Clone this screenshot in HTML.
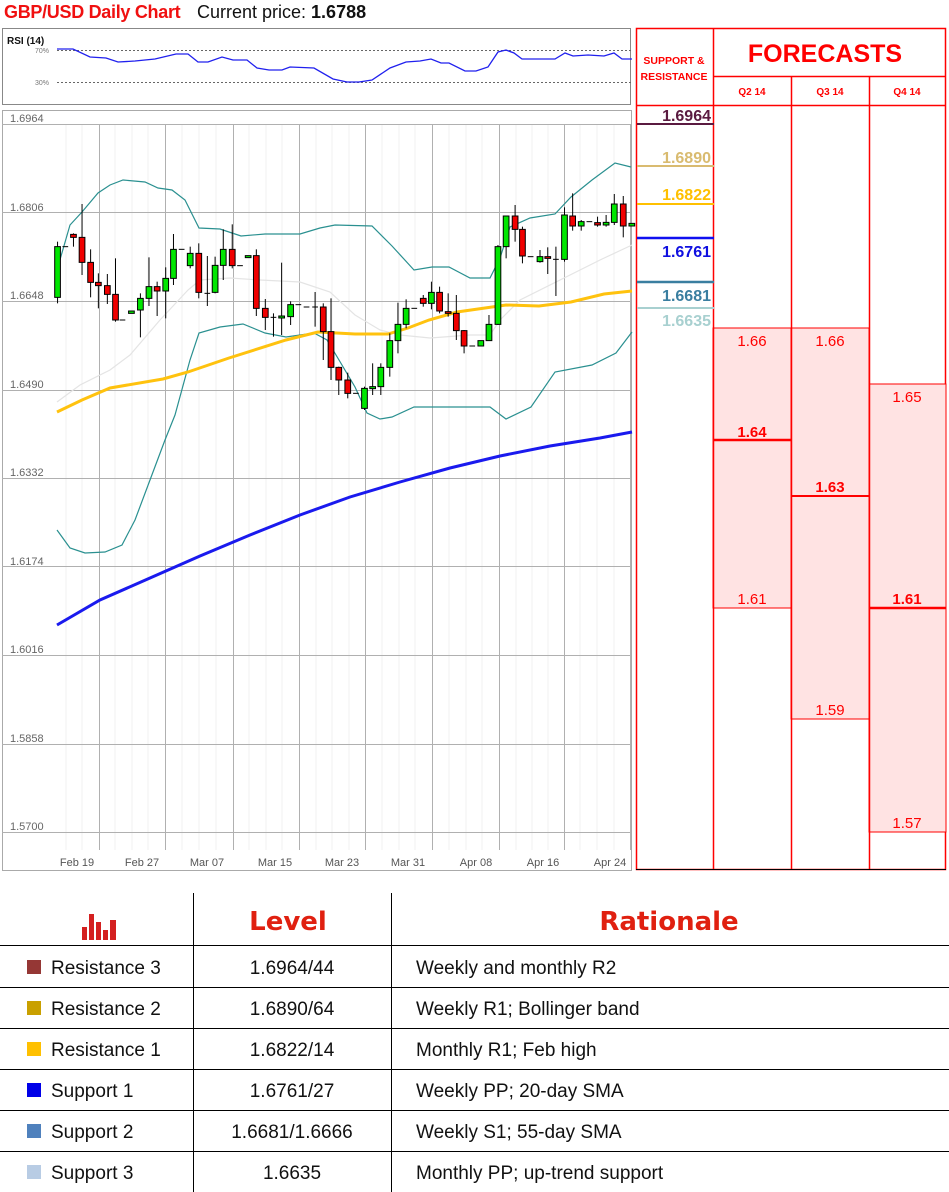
<!DOCTYPE html>
<html><head><meta charset="utf-8">
<style>
body{margin:0;width:949px;height:1192px;background:#fff;position:relative;overflow:hidden;font-family:"Liberation Sans",sans-serif}
.t{position:absolute;white-space:nowrap}
.g{fill:#00e600;stroke:#000}
.r{fill:#f00000;stroke:#000}
svg *{vector-effect:non-scaling-stroke}
</style></head><body>
<div class="t" style="left:4px;top:2px;font-size:18px;font-weight:bold;color:#f01010;letter-spacing:-0.3px">GBP/USD Daily Chart</div>
<div class="t" style="left:197px;top:2px;font-size:18px;color:#111">Current price: <b>1.6788</b></div>

<svg width="949" height="880" style="position:absolute;left:0;top:0" font-family="Liberation Sans, sans-serif">
<!-- RSI box -->
<rect x="2.5" y="28.5" width="628" height="76" fill="#fff" stroke="#888"/>
<text x="7" y="44" font-size="10" font-weight="bold" fill="#111">RSI (14)</text>
<text x="35" y="53" font-size="7" fill="#777">70%</text>
<text x="35" y="85" font-size="7" fill="#777">30%</text>
<line x1="57" y1="50.5" x2="631" y2="50.5" stroke="#666" stroke-dasharray="2,2"/>
<line x1="57" y1="82.5" x2="631" y2="82.5" stroke="#666" stroke-dasharray="2,2"/>
<polyline fill="none" stroke="#2020ee" stroke-width="1.3" points="57,49 73,49 90,57 106,58 118,62 135,61 155,59 176,54 188,54 198,62 208,62 222,57 233,60 247,60 257,68 269,70 282,70 290,67 314,68 333,79 347,82 359,82 372,80 390,68 406,62 420,61 431,59 441,63 449,63 465,71 476,71 488,67 498,52 506,50 514,53 522,59 555,59 565,53 573,56 588,55 604,56 614,53 622,59 632,59"/>

<!-- main chart -->
<rect x="2.5" y="110.5" width="629" height="760" fill="#fff" stroke="#aaa"/>
<g stroke="#f0f0f0">
<line x1="115" y1="124" x2="115" y2="850"/><line x1="132" y1="124" x2="132" y2="850"/><line x1="148" y1="124" x2="148" y2="850"/><line x1="182" y1="124" x2="182" y2="850"/><line x1="199" y1="124" x2="199" y2="850"/><line x1="216" y1="124" x2="216" y2="850"/><line x1="249" y1="124" x2="249" y2="850"/><line x1="266" y1="124" x2="266" y2="850"/><line x1="282" y1="124" x2="282" y2="850"/><line x1="316" y1="124" x2="316" y2="850"/><line x1="332" y1="124" x2="332" y2="850"/><line x1="349" y1="124" x2="349" y2="850"/><line x1="382" y1="124" x2="382" y2="850"/><line x1="399" y1="124" x2="399" y2="850"/><line x1="415" y1="124" x2="415" y2="850"/><line x1="449" y1="124" x2="449" y2="850"/><line x1="466" y1="124" x2="466" y2="850"/><line x1="482" y1="124" x2="482" y2="850"/><line x1="516" y1="124" x2="516" y2="850"/><line x1="532" y1="124" x2="532" y2="850"/><line x1="548" y1="124" x2="548" y2="850"/><line x1="580" y1="124" x2="580" y2="850"/><line x1="597" y1="124" x2="597" y2="850"/><line x1="614" y1="124" x2="614" y2="850"/>
<line x1="66" y1="124" x2="66" y2="850"/><line x1="82" y1="124" x2="82" y2="850"/>
</g>
<g stroke="#b0b0b0">
<line x1="2" y1="124.5" x2="631" y2="124.5"/><line x1="2" y1="212.5" x2="631" y2="212.5"/><line x1="2" y1="301.5" x2="631" y2="301.5"/><line x1="2" y1="390.5" x2="631" y2="390.5"/><line x1="2" y1="478.5" x2="631" y2="478.5"/><line x1="2" y1="566.5" x2="631" y2="566.5"/><line x1="2" y1="655.5" x2="631" y2="655.5"/><line x1="2" y1="744.5" x2="631" y2="744.5"/><line x1="2" y1="832.5" x2="631" y2="832.5"/>
<line x1="99.5" y1="124" x2="99.5" y2="850"/><line x1="165.5" y1="124" x2="165.5" y2="850"/><line x1="233.5" y1="124" x2="233.5" y2="850"/><line x1="299.5" y1="124" x2="299.5" y2="850"/><line x1="365.5" y1="124" x2="365.5" y2="850"/><line x1="432.5" y1="124" x2="432.5" y2="850"/><line x1="499.5" y1="124" x2="499.5" y2="850"/><line x1="564.5" y1="124" x2="564.5" y2="850"/><line x1="630.5" y1="124" x2="630.5" y2="850"/>
</g>
<g font-size="11" fill="#666">
<text x="10" y="122">1.6964</text><text x="10" y="211">1.6806</text><text x="10" y="299">1.6648</text><text x="10" y="388">1.6490</text><text x="10" y="476">1.6332</text><text x="10" y="565">1.6174</text><text x="10" y="653">1.6016</text><text x="10" y="742">1.5858</text><text x="10" y="830">1.5700</text>
</g>
<g font-size="11" fill="#555" text-anchor="middle">
<text x="77" y="866">Feb 19</text><text x="142" y="866">Feb 27</text><text x="207" y="866">Mar 07</text><text x="275" y="866">Mar 15</text><text x="342" y="866">Mar 23</text><text x="408" y="866">Mar 31</text><text x="476" y="866">Apr 08</text><text x="543" y="866">Apr 16</text><text x="610" y="866">Apr 24</text>
</g>

<polyline fill="none" stroke="#1a1aee" stroke-width="3" points="57,625 100,600 150,578 200,556 250,535 300,515 350,497 400,482 450,468 500,456 550,446 600,438 632,432"/>
<polyline fill="none" stroke="#e4e4e4" stroke-width="1.2" points="57,402 80,385 110,370 130,355 160,320 188,290 200,280 230,278 260,280 300,282 330,292 355,315 380,330 400,335 430,338 470,335 490,335 500,320 520,300 560,280 600,260 632,245"/>
<polyline fill="none" stroke="#2a9090" stroke-width="1.2" points="57,270 70,225 82,212 98,193 110,185 123,180 145,182 158,188 172,190 185,200 199,228 220,229 241,236 265,234 300,234 320,228 335,225 372,226 392,246 414,270 432,267 449,267 470,278 490,278 500,258 510,227 530,218 555,214 571,197 592,180 615,163 631,167"/>
<polyline fill="none" stroke="#2a9090" stroke-width="1.2" points="57,530 70,548 85,553 105,552 122,545 135,520 150,480 165,440 175,415 190,360 199,333 220,327 243,324 265,333 286,337 314,333 327,340 339,360 355,387 367,413 380,419 392,417 414,407 490,407 506,419 531,407 555,372 592,365 616,353 632,332"/>
<polyline fill="none" stroke="#ffc20e" stroke-width="3" points="57,412 82,400 110,388 163,379 188,372 229,358 286,340 318,332 355,334 388,334 408,328 429,320 457,312 506,305 539,306 571,302 604,294 632,291"/>

<g transform="translate(0,180) scale(0.40816,0.33333)" stroke="#000" stroke-width="1">
<line x1="141" y1="185" x2="141" y2="370"/><rect class="g" x="134" y="200" width="14" height="152"/>
<line x1="153" y1="200" x2="167" y2="200"/>
<line x1="180" y1="160" x2="180" y2="200"/><rect class="r" x="173" y="163" width="14" height="9"/>
<line x1="201" y1="72" x2="201" y2="285"/><rect class="r" x="194" y="172" width="14" height="75"/>
<line x1="222" y1="208" x2="222" y2="352"/><rect class="r" x="215" y="247" width="14" height="60"/>
<line x1="241" y1="280" x2="241" y2="385"/><rect class="r" x="234" y="307" width="14" height="10"/>
<line x1="263" y1="282" x2="263" y2="372"/><rect class="r" x="256" y="317" width="14" height="26"/>
<line x1="283" y1="235" x2="283" y2="425"/><rect class="r" x="276" y="343" width="14" height="77"/>
<line x1="293" y1="420" x2="307" y2="420"/>
<rect class="g" x="315" y="393" width="14" height="7"/>
<line x1="344" y1="340" x2="344" y2="472"/><rect class="g" x="337" y="355" width="14" height="35"/>
<line x1="365" y1="232" x2="365" y2="378"/><rect class="g" x="358" y="320" width="14" height="35"/>
<line x1="385" y1="305" x2="385" y2="408"/><rect class="r" x="378" y="320" width="14" height="13"/>
<line x1="406" y1="262" x2="406" y2="415"/><rect class="g" x="399" y="295" width="14" height="38"/>
<line x1="425" y1="162" x2="425" y2="315"/><rect class="g" x="418" y="208" width="14" height="87"/>
<line x1="438" y1="208" x2="452" y2="208"/>
<line x1="466" y1="200" x2="466" y2="265"/><rect class="g" x="459" y="220" width="14" height="37"/>
<line x1="487" y1="190" x2="487" y2="355"/><rect class="r" x="480" y="220" width="14" height="117"/>
<line x1="508" y1="228" x2="508" y2="378"/><line x1="501" y1="340" x2="515" y2="340"/>
<line x1="527" y1="230" x2="527" y2="340"/><rect class="g" x="520" y="256" width="14" height="81"/>
<line x1="547" y1="148" x2="547" y2="300"/><rect class="g" x="540" y="208" width="14" height="48"/>
<line x1="569" y1="133" x2="569" y2="265"/><rect class="r" x="562" y="208" width="14" height="49"/>
<line x1="581" y1="257" x2="595" y2="257"/>
<rect class="g" x="601" y="227" width="14" height="6"/>
<line x1="628" y1="208" x2="628" y2="408"/><rect class="r" x="621" y="227" width="14" height="158"/>
<line x1="650" y1="357" x2="650" y2="450"/><rect class="r" x="643" y="385" width="14" height="27"/>
<line x1="670" y1="400" x2="670" y2="470"/><line x1="663" y1="412" x2="677" y2="412"/>
<line x1="690" y1="248" x2="690" y2="465"/><rect class="g" x="683" y="408" width="14" height="6"/>
<line x1="712" y1="364" x2="712" y2="435"/><rect class="g" x="705" y="374" width="14" height="36"/>
<line x1="724" y1="374" x2="738" y2="374"/>
<line x1="744" y1="381" x2="758" y2="381"/>
<line x1="772" y1="336" x2="772" y2="440"/><line x1="765" y1="381" x2="779" y2="381"/>
<line x1="792" y1="370" x2="792" y2="540"/><rect class="r" x="785" y="381" width="14" height="74"/>
<line x1="811" y1="355" x2="811" y2="600"/><rect class="r" x="804" y="455" width="14" height="107"/>
<line x1="830" y1="560" x2="830" y2="645"/><rect class="r" x="823" y="562" width="14" height="38"/>
<line x1="852" y1="578" x2="852" y2="655"/><rect class="r" x="845" y="600" width="14" height="40"/>
<line x1="865" y1="640" x2="879" y2="640"/>
<line x1="893" y1="620" x2="893" y2="690"/><rect class="g" x="886" y="625" width="14" height="60"/>
<line x1="913" y1="550" x2="913" y2="645"/><rect class="g" x="906" y="620" width="14" height="6"/>
<line x1="933" y1="550" x2="933" y2="645"/><rect class="g" x="926" y="562" width="14" height="58"/>
<line x1="955" y1="460" x2="955" y2="590"/><rect class="g" x="948" y="482" width="14" height="80"/>
<line x1="975" y1="368" x2="975" y2="520"/><rect class="g" x="968" y="433" width="14" height="49"/>
<line x1="995" y1="358" x2="995" y2="445"/><rect class="g" x="988" y="385" width="14" height="48"/>
<line x1="1008" y1="385" x2="1022" y2="385"/>
<line x1="1037" y1="345" x2="1037" y2="380"/><rect class="r" x="1030" y="355" width="14" height="15"/>
<line x1="1057" y1="305" x2="1057" y2="388"/><rect class="g" x="1050" y="337" width="14" height="33"/>
<line x1="1077" y1="320" x2="1077" y2="400"/><rect class="r" x="1070" y="337" width="14" height="56"/>
<line x1="1098" y1="340" x2="1098" y2="410"/><rect class="r" x="1091" y="395" width="14" height="5"/>
<line x1="1118" y1="345" x2="1118" y2="480"/><rect class="r" x="1111" y="400" width="14" height="52"/>
<line x1="1137" y1="450" x2="1137" y2="520"/><rect class="r" x="1130" y="452" width="14" height="46"/>
<line x1="1150" y1="498" x2="1164" y2="498"/>
<rect class="g" x="1171" y="482" width="14" height="16"/>
<line x1="1198" y1="405" x2="1198" y2="482"/><rect class="g" x="1191" y="433" width="14" height="49"/>
<line x1="1220" y1="195" x2="1220" y2="435"/><rect class="g" x="1213" y="200" width="14" height="233"/>
<line x1="1240" y1="108" x2="1240" y2="235"/><rect class="g" x="1233" y="108" width="14" height="92"/>
<line x1="1262" y1="75" x2="1262" y2="185"/><rect class="r" x="1255" y="108" width="14" height="40"/>
<line x1="1280" y1="140" x2="1280" y2="250"/><rect class="r" x="1273" y="148" width="14" height="80"/>
<line x1="1293" y1="230" x2="1307" y2="230"/>
<line x1="1323" y1="210" x2="1323" y2="248"/><rect class="g" x="1316" y="230" width="14" height="15"/>
<line x1="1342" y1="202" x2="1342" y2="282"/><rect class="r" x="1335" y="230" width="14" height="5"/>
<line x1="1362" y1="200" x2="1362" y2="348"/><line x1="1355" y1="238" x2="1369" y2="238"/>
<line x1="1383" y1="82" x2="1383" y2="245"/><rect class="g" x="1376" y="105" width="14" height="133"/>
<line x1="1403" y1="40" x2="1403" y2="152"/><rect class="r" x="1396" y="108" width="14" height="30"/>
<line x1="1424" y1="120" x2="1424" y2="152"/><rect class="g" x="1417" y="125" width="14" height="13"/>
<line x1="1437" y1="125" x2="1451" y2="125"/>
<line x1="1464" y1="110" x2="1464" y2="140"/><rect class="r" x="1457" y="128" width="14" height="7"/>
<line x1="1485" y1="105" x2="1485" y2="140"/><rect class="g" x="1478" y="127" width="14" height="8"/>
<line x1="1505" y1="42" x2="1505" y2="135"/><rect class="g" x="1498" y="72" width="14" height="55"/>
<line x1="1527" y1="48" x2="1527" y2="172"/><rect class="r" x="1520" y="72" width="14" height="66"/>
<rect class="g" x="1541" y="130" width="14" height="8"/>
</g>

<!-- right panel -->
<rect x="636.5" y="28.5" width="309" height="841" fill="#fff" stroke="#f00" stroke-width="1.5"/>
<rect x="713" y="328" width="78" height="280" fill="#ffe3e3" stroke="#f00"/>
<rect x="791" y="328" width="78" height="391" fill="#ffe3e3" stroke="#f00"/>
<rect x="869" y="384" width="77" height="448" fill="#ffe3e3" stroke="#f00"/>
<g stroke="#f00" stroke-width="1.5">
<line x1="713.5" y1="28" x2="713.5" y2="869"/>
<line x1="791.5" y1="76" x2="791.5" y2="869"/>
<line x1="869.5" y1="76" x2="869.5" y2="869"/>
<line x1="713" y1="76.5" x2="946" y2="76.5"/>
<line x1="636" y1="105.5" x2="946" y2="105.5"/>
</g>
<line x1="713" y1="440" x2="791" y2="440" stroke="#f00" stroke-width="2.5"/>
<line x1="791" y1="496" x2="869" y2="496" stroke="#f00" stroke-width="2"/>
<line x1="869" y1="608" x2="946" y2="608" stroke="#f00" stroke-width="2.5"/>
<line x1="636" y1="869.5" x2="946" y2="869.5" stroke="#000" stroke-width="1"/>
<g fill="#f00" font-weight="bold" text-anchor="middle">
<text x="674" y="64" font-size="10.5">SUPPORT &amp;</text>
<text x="674" y="80" font-size="10.5">RESISTANCE</text>
<text x="825" y="62" font-size="25" fill="#f00">FORECASTS</text>
<text x="752" y="95" font-size="10">Q2 14</text>
<text x="830" y="95" font-size="10">Q3 14</text>
<text x="907" y="95" font-size="10">Q4 14</text>
</g>
<g fill="#f00" font-size="15" text-anchor="middle">
<text x="752" y="346">1.66</text><text x="752" y="604">1.61</text>
<text x="830" y="346">1.66</text><text x="830" y="715">1.59</text>
<text x="907" y="402">1.65</text><text x="907" y="828">1.57</text>
<text x="752" y="437" font-weight="bold">1.64</text>
<text x="830" y="492" font-weight="bold">1.63</text>
<text x="907" y="604" font-weight="bold">1.61</text>
</g>
<g font-size="16" font-weight="bold" text-anchor="end">
<text x="711" y="121" fill="#5a1a40">1.6964</text>
<text x="711" y="163" fill="#d9bb70">1.6890</text>
<text x="711" y="200" fill="#ffc000">1.6822</text>
<text x="711" y="257" fill="#1010e0">1.6761</text>
<text x="711" y="301" fill="#3a7ea0">1.6681</text>
<text x="711" y="326" fill="#a8d0d0">1.6635</text>
</g>
<line x1="637" y1="124" x2="714" y2="124" stroke="#5a1a40" stroke-width="2"/>
<line x1="637" y1="166" x2="714" y2="166" stroke="#d9bb70" stroke-width="2"/>
<line x1="637" y1="204" x2="714" y2="204" stroke="#ffc000" stroke-width="2"/>
<line x1="637" y1="238" x2="714" y2="238" stroke="#1010f0" stroke-width="2.5"/>
<line x1="637" y1="282" x2="714" y2="282" stroke="#3a7ea0" stroke-width="2.5"/>
<line x1="637" y1="308" x2="714" y2="308" stroke="#a8d0d0" stroke-width="2"/>
</svg>

<!-- table -->
<svg width="949" height="312" style="position:absolute;left:0;top:880px" font-family="Liberation Sans, sans-serif">
<g stroke="#000" stroke-width="1">
<line x1="193.5" y1="13" x2="193.5" y2="312"/>
<line x1="391.5" y1="13" x2="391.5" y2="312"/>
<line x1="0" y1="65.5" x2="949" y2="65.5"/>
<line x1="0" y1="107.5" x2="949" y2="107.5"/>
<line x1="0" y1="148.5" x2="949" y2="148.5"/>
<line x1="0" y1="189.5" x2="949" y2="189.5"/>
<line x1="0" y1="230.5" x2="949" y2="230.5"/>
<line x1="0" y1="271.5" x2="949" y2="271.5"/>
</g>
<g fill="#d42020">
<rect x="82" y="47" width="5" height="13"/><rect x="89" y="34" width="5" height="26"/><rect x="96" y="42" width="5" height="18"/><rect x="103" y="50" width="5" height="10"/><rect x="110" y="40" width="6" height="20"/>
</g>
<text x="288" y="50" font-size="26" font-weight="900" fill="#e02010" text-anchor="middle" font-family="DejaVu Sans, sans-serif">Level</text>
<text x="669" y="50" font-size="26" font-weight="900" fill="#e02010" text-anchor="middle" font-family="DejaVu Sans, sans-serif">Rationale</text>
<rect x="27" y="80" width="14" height="14" fill="#953735"/>
<rect x="27" y="121" width="14" height="14" fill="#c9a000"/>
<rect x="27" y="162" width="14" height="14" fill="#ffc000"/>
<rect x="27" y="203" width="14" height="14" fill="#0000e8"/>
<rect x="27" y="244" width="14" height="14" fill="#4f81bd"/>
<rect x="27" y="285" width="14" height="14" fill="#b8cce4"/>
<g font-size="19" fill="#111">
<text x="51" y="94">Resistance 3</text><text x="51" y="135">Resistance 2</text><text x="51" y="176">Resistance 1</text><text x="51" y="217">Support 1</text><text x="51" y="258">Support 2</text><text x="51" y="299">Support 3</text>
<g text-anchor="middle"><text x="292" y="94">1.6964/44</text><text x="292" y="135">1.6890/64</text><text x="292" y="176">1.6822/14</text><text x="292" y="217">1.6761/27</text><text x="292" y="258">1.6681/1.6666</text><text x="292" y="299">1.6635</text></g>
<text x="416" y="94">Weekly and monthly R2</text><text x="416" y="135">Weekly R1; Bollinger band</text><text x="416" y="176">Monthly R1; Feb high</text><text x="416" y="217">Weekly PP; 20-day SMA</text><text x="416" y="258">Weekly S1; 55-day SMA</text><text x="416" y="299">Monthly PP; up-trend support</text>
</g>
</svg>
</body></html>
